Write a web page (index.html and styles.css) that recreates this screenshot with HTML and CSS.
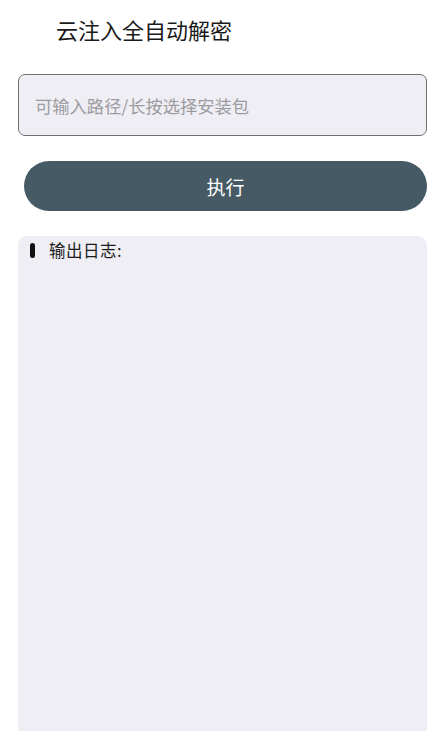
FILE: index.html
```html
<!DOCTYPE html>
<html lang="zh-CN">
<head>
<meta charset="utf-8">
<title>云注入全自动解密</title>
<link rel="stylesheet" href="styles.css">
</head>
<body>
<main class="screen">
  <h1 class="title">云注入全自动解密</h1>
  <input class="path-input" type="text" placeholder="可输入路径/长按选择安装包">
  <button class="run-btn" type="button">执行</button>
  <section class="log">
    <div class="log-head">
      <span class="log-bar"></span>
      <span class="log-label">输出日志:</span>
    </div>
  </section>
</main>
</body>
</html>
```
FILE: styles.css
```css
* { box-sizing: border-box; }
html, body {
  margin: 0;
  padding: 0;
  background: #ffffff;
  height: 100%;
}
body {
  font-family: "Noto Sans CJK SC", "Noto Sans", sans-serif;
  color: #1c1c1c;
}
.screen {
  display: flex;
  flex-direction: column;
  height: 100vh;
  overflow: hidden;
}
.title {
  margin: 0;
  padding: 14px 0 0 56px;
  font-size: 22px;
  line-height: 30px;
  font-weight: 400;
  color: #1a1a1a;
}
.path-input {
  margin: 30px 17px 0 18px;
  height: 62px;
  border: 1px solid #707070;
  border-radius: 7px;
  background: #efeef4;
  padding: 0 0 0 16px;
  font-family: inherit;
  font-size: 17.3px;
  color: #222;
  outline: none;
}
.path-input::placeholder {
  color: #9c9ca0;
}
.run-btn {
  margin: 25px 17px 0 24px;
  height: 50px;
  border: none;
  border-radius: 25px;
  background: #455a64;
  color: #ffffff;
  font-family: inherit;
  font-size: 19px;
  padding: 0;
}
.log {
  flex: 1;
  margin: 25px 17px 0 18px;
  background: #efeef4;
  border-radius: 9px 9px 0 0;
  padding: 4px 12px;
}
.log-head {
  display: flex;
  align-items: center;
  gap: 14px;
}
.log-bar {
  width: 5px;
  height: 15px;
  border-radius: 3px;
  background: #111;
}
.log-label {
  font-size: 16.5px;
  line-height: 20px;
  letter-spacing: 0.5px;
  color: #1c1c1c;
}
```
